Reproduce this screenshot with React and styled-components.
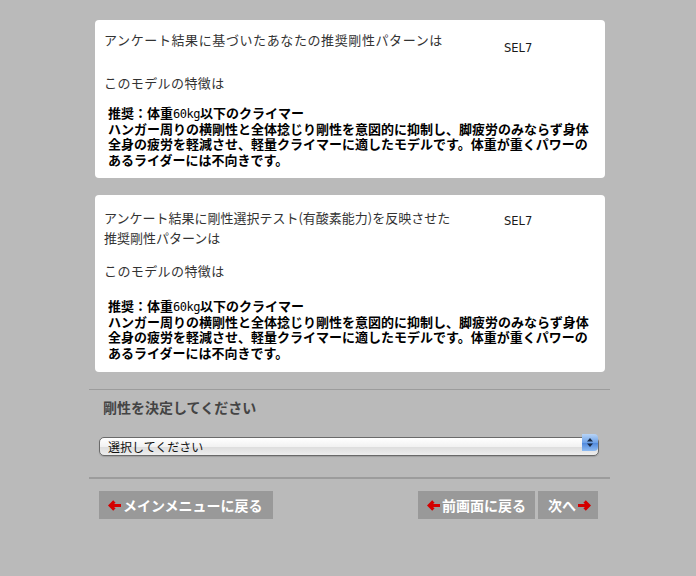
import React from 'react';
import styled, { createGlobalStyle } from 'styled-components';

const GlobalStyle = createGlobalStyle`
  body {
    margin: 0;
    background: #bababa;
    font-family: "Noto Sans CJK JP", "Noto Sans", sans-serif;
  }
`;

const Page = styled.div`
  width: 521px;
  margin-left: 89px;
  padding-top: 20px;
`;

const Card = styled.div`
  background: #fff;
  border-radius: 4px;
  margin: 0 5px 17px 6px;
  padding: ${(p) => p.$top}px 12px ${(p) => p.$bottom}px 9px;
`;

const HeadRow = styled.div`
  display: flex;
  align-items: flex-start;
`;

const Heading = styled.div`
  width: 400px;
  font-size: 13px;
  line-height: 20px;
  letter-spacing: ${(p) => p.$spacing}px;
  color: #333;
`;

const Code = styled.div`
  padding-top: ${(p) => p.$offset}px;
  font-family: "DejaVu Sans", sans-serif;
  font-size: 11.5px;
  line-height: 20px;
  color: #1a1a1a;
`;

const Feature = styled.div`
  margin-top: ${(p) => p.$gap}px;
  font-size: 13px;
  line-height: 20px;
  letter-spacing: 0.4px;
  color: #333;
`;

const Body = styled.div`
  margin-top: ${(p) => p.$gap}px;
  padding-left: 4px;
  font-size: 13px;
  line-height: 15.5px;
  font-weight: 700;
  color: #000;
  white-space: nowrap;
`;

const Mono = styled.span`
  font-family: "DejaVu Sans Mono", monospace;
  font-weight: 400;
  font-size: 12px;
  line-height: 10px;
  letter-spacing: -0.5px;
`;

const Divider = styled.div`
  height: ${(p) => p.$thick}px;
  background: #9c9c9c;
`;

const Prompt = styled.div`
  margin: 7px 0 0 14px;
  font-size: 14px;
  line-height: 20px;
  font-weight: 700;
  color: #444;
`;

const SelectBox = styled.div`
  position: relative;
  width: 500px;
  height: 19px;
  margin: 16px 0 25px 10px;
`;

const Select = styled.select`
  appearance: none;
  width: 100%;
  height: 100%;
  box-sizing: border-box;
  border: 1px solid #6a6a6a;
  border-radius: 5px;
  padding: 0 0 0 8px;
  background: linear-gradient(#ffffff, #f2f2f2 50%, #dcdcdc 51%, #eeeeee);
  font-family: "Noto Sans CJK JP", sans-serif;
  font-size: 12px;
  line-height: 17px;
  color: #111;
  box-shadow: 0 1px 1px rgba(0, 0, 0, 0.15);
`;

const Spinner = styled.span`
  position: absolute;
  top: 1px;
  right: 1px;
  width: 16px;
  height: 17px;
  border-radius: 0 4px 4px 0;
  background: linear-gradient(#b8d4f6, #6ea2e8 50%, #4c86dc 51%, #8fbcf2);
  display: flex;
  align-items: center;
  justify-content: center;
  pointer-events: none;
`;

const ButtonRow = styled.div`
  display: flex;
  justify-content: space-between;
  padding: 12px 12px 0 10px;
`;

const Group = styled.div`
  display: flex;
  gap: 3px;
`;

const NavButton = styled.button`
  display: flex;
  align-items: center;
  gap: ${(p) => p.$gap}px;
  height: 28px;
  padding: 0 ${(p) => p.$right}px 0 ${(p) => p.$left}px;
  border: none;
  background: #999;
  color: #fff;
  font-family: "Noto Sans CJK JP", sans-serif;
  font-size: 14px;
  font-weight: 700;
  cursor: pointer;
`;

const Arrow = ({ dir }) => (
  <svg width="13" height="11" viewBox="0 0 13 11">
    <path
      d="M0 5.5 L5.2 0.3 L7.6 2.7 L6 4 L13 4 L13 7 L6 7 L7.6 8.3 L5.2 10.7 Z"
      fill="#d40000"
      transform={dir === 'right' ? 'translate(13 0) scale(-1 1)' : undefined}
    />
  </svg>
);

const ResultCard = ({ heading, spacing, code, top, bottom, codeOffset, featureGap, bodyGap }) => (
  <Card $top={top} $bottom={bottom}>
    <HeadRow>
      <Heading $spacing={spacing}>{heading}</Heading>
      <Code $offset={codeOffset}>{code}</Code>
    </HeadRow>
    <Feature $gap={featureGap}>このモデルの特徴は</Feature>
    <Body $gap={bodyGap}>
      推奨：体重<Mono>60kg</Mono>以下のクライマー
      <br />
      ハンガー周りの横剛性と全体捻じり剛性を意図的に抑制し、脚疲労のみならず身体
      <br />
      全身の疲労を軽減させ、軽量クライマーに適したモデルです。体重が重くパワーの
      <br />
      あるライダーには不向きです。
    </Body>
  </Card>
);

const App = () => (
  <Page>
    <GlobalStyle />
    <ResultCard
      heading="アンケート結果に基づいたあなたの推奨剛性パターンは"
      spacing={0.6}
      code="SEL7"
      top={10}
      bottom={11}
      codeOffset={8}
      featureGap={15}
      bodyGap={12}
    />
    <ResultCard
      heading={
        <>
          アンケート結果に剛性選択テスト(有酸素能力)を反映させた
          <br />
          推奨剛性パターンは
        </>
      }
      spacing={0}
      code="SEL7"
      top={13}
      bottom={12}
      codeOffset={3}
      featureGap={13}
      bodyGap={17}
    />
    <Divider $thick={1} />
    <Prompt>剛性を決定してください</Prompt>
    <SelectBox>
      <Select defaultValue="">
        <option value="">選択してください</option>
        <option value="SEL7">SEL7</option>
      </Select>
      <Spinner>
        <svg width="6" height="11" viewBox="0 0 6 11">
          <path d="M3 1 L6 4.5 L0 4.5 Z M0 6.5 L6 6.5 L3 10 Z" fill="#1a2a44" />
        </svg>
      </Spinner>
    </SelectBox>
    <Divider $thick={2} />
    <ButtonRow>
      <NavButton $left={9} $right={10} $gap={2}>
        <Arrow dir="left" />
        メインメニューに戻る
      </NavButton>
      <Group>
        <NavButton $left={9} $right={9} $gap={2}>
          <Arrow dir="left" />
          前画面に戻る
        </NavButton>
        <NavButton $left={10} $right={7} $gap={2}>
          次へ
          <Arrow dir="right" />
        </NavButton>
      </Group>
    </ButtonRow>
  </Page>
);

export default App;
